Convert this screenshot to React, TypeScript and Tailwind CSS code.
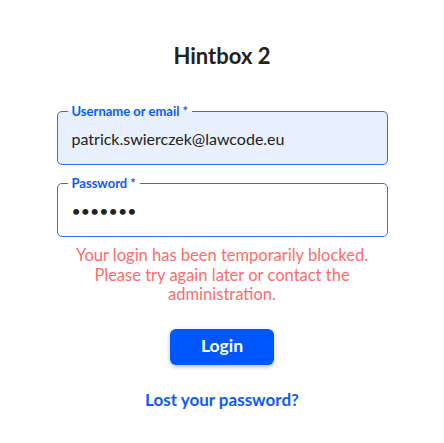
import { useState } from "react";

const font = { fontFamily: "Lato, 'Noto Sans', sans-serif" };

function Field({
  label,
  type,
  value,
  filled,
}: {
  label: string;
  type: string;
  value: string;
  filled?: boolean;
}) {
  return (
    <fieldset
      className={`rounded-[5px] border border-[#2f6bff] px-0 pb-0 ${filled ? "bg-[#e8f0fe]" : "bg-white"}`}
    >
      <legend className="ml-[10px] px-[4px] text-[13px] font-bold leading-[14px] text-[#0a5cff]">
        {label}
      </legend>
      <input
        type={type}
        value={value}
        readOnly
        className="block h-[46px] w-full bg-transparent pb-[6px] pl-[14px] text-[16px] text-[#222] outline-none"
        style={font}
      />
    </fieldset>
  );
}

export default function App() {
  const [user] = useState("patrick.swierczek@lawcode.eu");
  const [pass] = useState("1234567");

  return (
    <div className="min-h-screen bg-white" style={font}>
      <div className="mx-auto flex w-[331px] flex-col pt-[41px]">
        <h1 className="text-center text-[22px] font-bold leading-[30px] text-[#222]">Hintbox 2</h1>

        <div className="mt-[33px] flex flex-col gap-[11px]">
          <Field label="Username or email *" type="text" value={user} filled />
          <Field label="Password *" type="password" value={pass} />
        </div>

        <p className="mt-[9px] px-[4px] text-center text-[16.5px] leading-[19.5px] text-[#ff6b6b]">
          Your login has been temporarily blocked. Please try again later or contact the administration.
        </p>

        <button
          type="button"
          className="mx-auto mt-[24px] h-[36px] w-[104px] rounded-[6px] bg-[#0056ff] text-[17.5px] font-bold text-white shadow-[0_2px_4px_rgba(0,0,0,0.25)]"
        >
          Login
        </button>

        <a href="#" className="mt-[24px] text-center text-[17px] font-bold leading-[22px] text-[#0a5cff]">
          Lost your password?
        </a>
      </div>
    </div>
  );
}
